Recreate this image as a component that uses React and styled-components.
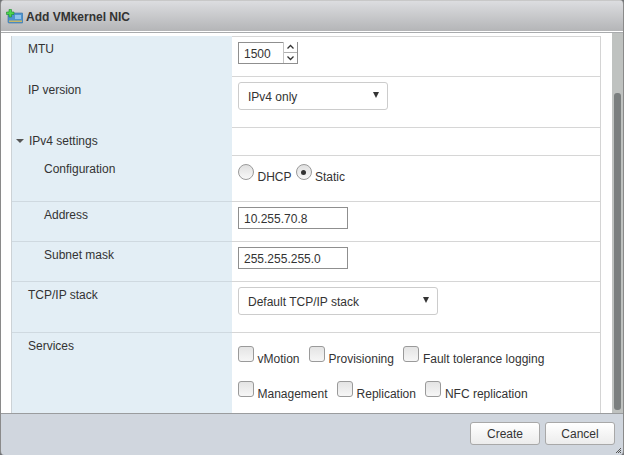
import React from 'react';
import styled, { createGlobalStyle } from 'styled-components';

const Global = createGlobalStyle`
  html, body { margin: 0; padding: 0; background: #6f7275; }
  #root { width: 624px; height: 455px; }
  * { box-sizing: border-box; }
`;

const Dialog = styled.div`
  width: 624px; height: 455px; display: flex; flex-direction: column;
  font-family: "Liberation Sans", Arial, sans-serif; font-size: 12px; color: #333;
  border-radius: 4px; overflow: hidden; border-left: 1px solid #8a8a8a; border-right: 1px solid #8a8a8a;
  position: relative;
`;
const TitleBar = styled.div`
  height: 32px; flex: none; display: flex; align-items: center; gap: 3px; padding: 1px 0 0 5px;
  background: linear-gradient(#dcdde0, #b4b5b7);
  border-top: 1px solid #c8c8c8; border-bottom: 1px solid #fff;
`;
const Title = styled.span`font-weight: bold; font-size: 12px; color: #333;`;
const Main = styled.div`
  flex: 1; min-height: 0; display: flex; background: #fff; border-top: 1px solid #a9abad;
`;
const Content = styled.div`
  width: 600px; flex: none; padding: 3px 0 0 10px; overflow: hidden;
`;
const Table = styled.div`
  border-left: 1px solid #ccd2d6; border-right: 1px solid #d4d4d4; height: 100%;
  background: linear-gradient(90deg, #e3eef5 220px, #fff 220px);
`;
const Row = styled.div`
  display: grid; grid-template-columns: 220px 1fr; height: ${p => p.$h}px;
`;
const Label = styled.div`
  padding: 6px 0 0 ${p => (p.$indent ? 32 : 16)}px; line-height: 14px;
  border-bottom: 1px solid ${p => (p.$line ? '#cfd9e0' : 'transparent')};
  display: flex; align-items: flex-start;
`;
const Caret = styled.span`
  width: 0; height: 0; margin: 5px 5px 0 -12px;
  border-left: 4px solid transparent; border-right: 4px solid transparent; border-top: 4px solid #555;
`;
const Cell = styled.div`
  padding: ${p => p.$pt ?? 5}px 0 0 6px; border-bottom: 1px solid #d6d6d6;
  border-top: ${p => (p.$top ? '1px solid #d6d6d6' : '0')};
`;
const TextBox = styled.div`
  width: ${p => p.$w}px; height: 22px; border: 1px solid #8f8f8f; background: #fff;
  padding: 1px 0 0 5px; line-height: 20px; color: #333;
`;
const Spinner = styled.div`
  width: 60px; height: 22px; display: flex; border: 1px solid #8f8f8f; background: #fff;
`;
const SpinValue = styled.div`width: 44px; padding: 1px 0 0 5px; line-height: 20px;`;
const SpinButtons = styled.div`
  flex: 1; display: flex; flex-direction: column; border-left: 1px solid #c4c4c4; margin-top: -1px;
  background: #fff;
`;
const SpinBtn = styled.div`
  flex: 1; display: flex; align-items: center; justify-content: center;
  & + & { border-top: 1px solid #b0b0b0; }
`;
const Select = styled.div`
  width: ${p => p.$w}px; height: 28px; border: 1px solid #ccc; border-radius: 3px; background: #fff;
  display: flex; align-items: center; justify-content: space-between; padding: 0 8px 0 9px;
`;
const SelectText = styled.span`margin-top: 2px;`;
const Arrow = styled.span`
  width: 0; height: 0; margin-top: -2px;
  border-left: 3.5px solid transparent; border-right: 3.5px solid transparent; border-top: 6px solid #333;
`;
const OptionRow = styled.div`
  display: flex; align-items: flex-start; height: ${p => p.$h || 'auto'};
`;
const Option = styled.label`
  display: flex; align-items: flex-start; margin-right: ${p => p.$gap ?? 9.5}px;
`;
const OptionText = styled.span`margin: 6px 0 0 3.5px; line-height: 14px; white-space: nowrap;`;
const Check = styled.span`
  width: 16px; height: 16px; flex: none; border: 1px solid #9a9a9a; border-radius: 3px;
  background: linear-gradient(#e4e4e4, #f6f6f6);
`;
const Radio = styled.span`
  width: 16px; height: 16px; flex: none; border: 1px solid #9a9a9a; border-radius: 50%;
  background: linear-gradient(#e0e0e0, #f8f8f8); display: flex; align-items: center; justify-content: center;
  &::after { content: ""; width: 5px; height: 5px; border-radius: 50%; background: ${p => (p.$on ? '#333' : 'transparent')}; }
`;
const Track = styled.div`
  margin-left: 11px; width: 11px; background: #bfc2c0; padding: 60px 2px 3px 2px; flex: none;
`;
const Thumb = styled.div`height: 100%; width: 7px; background: #7b7f7f; border-radius: 3px;`;
const Footer = styled.div`
  height: 42px; flex: none; background: #d0d6de; border-top: 1px solid #9a9c9e;
  display: flex; justify-content: flex-end; align-items: flex-start; gap: 5px; padding: 8px 8px 0 0;
  position: relative;
`;
const Button = styled.div`
  width: 70px; height: 23px; border: 1px solid #a8a8a8; border-radius: 3px;
  background: linear-gradient(#fff, #ececec); text-align: center; padding-top: 1px; line-height: 20px; color: #333;
`;
const Grip = styled.svg`position: absolute; right: 1px; bottom: 1px;`;

const Icon = () => (
  <svg width="17" height="15" viewBox="0 0 17 15">
    <rect x="2" y="4" width="15" height="10" rx="1" fill="#4f93cf" stroke="#3a6f9f" strokeWidth="0.6" />
    <rect x="9" y="6" width="6" height="4" fill="#8fc2ea" />
    <rect x="3" y="11.5" width="13" height="1.5" fill="#c9b866" />
    <path d="M3 0.5h2.5v2.5H8v2.5H5.5V8H3V5.5H0.5V3H3z" fill="#4fd44f" stroke="#1c8a2c" strokeWidth="0.6" />
  </svg>
);
const Up = () => <svg width="9" height="6" viewBox="0 0 9 6"><path d="M1.5 4.5 4.5 1.5 7.5 4.5" fill="none" stroke="#333" strokeWidth="1.3" /></svg>;
const Down = () => <svg width="9" height="6" viewBox="0 0 9 6"><path d="M1.5 1.5 4.5 4.5 7.5 1.5" fill="none" stroke="#333" strokeWidth="1.3" /></svg>;

export default function App() {
  return (
    <Dialog>
      <Global />
      <TitleBar><Icon /><Title>Add VMkernel NIC</Title></TitleBar>
      <Main>
        <Content>
          <Table>
            <Row $h={41}>
              <Label>MTU</Label>
              <Cell $top>
                <Spinner>
                  <SpinValue>1500</SpinValue>
                  <SpinButtons><SpinBtn><Up /></SpinBtn><SpinBtn><Down /></SpinBtn></SpinButtons>
                </Spinner>
              </Cell>
            </Row>
            <Row $h={51}>
              <Label>IP version</Label>
              <Cell><Select $w={150}><SelectText>IPv4 only</SelectText><Arrow /></Select></Cell>
            </Row>
            <Row $h={28}>
              <Label><Caret />IPv4 settings</Label>
              <Cell />
            </Row>
            <Row $h={46}>
              <Label $indent $line>Configuration</Label>
              <Cell $pt={8}>
                <OptionRow>
                  <Option $gap={4}><Radio /><OptionText>DHCP</OptionText></Option>
                  <Option><Radio $on /><OptionText>Static</OptionText></Option>
                </OptionRow>
              </Cell>
            </Row>
            <Row $h={40}>
              <Label $indent $line>Address</Label>
              <Cell><TextBox $w={110}>10.255.70.8</TextBox></Cell>
            </Row>
            <Row $h={40}>
              <Label $indent $line>Subnet mask</Label>
              <Cell><TextBox $w={110}>255.255.255.0</TextBox></Cell>
            </Row>
            <Row $h={51}>
              <Label $line>TCP/IP stack</Label>
              <Cell><Select $w={200}><SelectText>Default TCP/IP stack</SelectText><Arrow /></Select></Cell>
            </Row>
            <Row $h={81}>
              <Label>Services</Label>
              <Cell $pt={13}>
                <OptionRow $h="35px">
                  <Option><Check /><OptionText>vMotion</OptionText></Option>
                  <Option><Check /><OptionText>Provisioning</OptionText></Option>
                  <Option><Check /><OptionText>Fault tolerance logging</OptionText></Option>
                </OptionRow>
                <OptionRow>
                  <Option><Check /><OptionText>Management</OptionText></Option>
                  <Option><Check /><OptionText>Replication</OptionText></Option>
                  <Option><Check /><OptionText>NFC replication</OptionText></Option>
                </OptionRow>
              </Cell>
            </Row>
          </Table>
        </Content>
        <Track><Thumb /></Track>
      </Main>
      <Footer>
        <Button>Create</Button>
        <Button>Cancel</Button>
        <Grip width="8" height="8" viewBox="0 0 8 8"><path d="M7 2 2 7M7 4 4 7M7 6 6 7" stroke="#555" strokeWidth="1" /></Grip>
      </Footer>
    </Dialog>
  );
}
